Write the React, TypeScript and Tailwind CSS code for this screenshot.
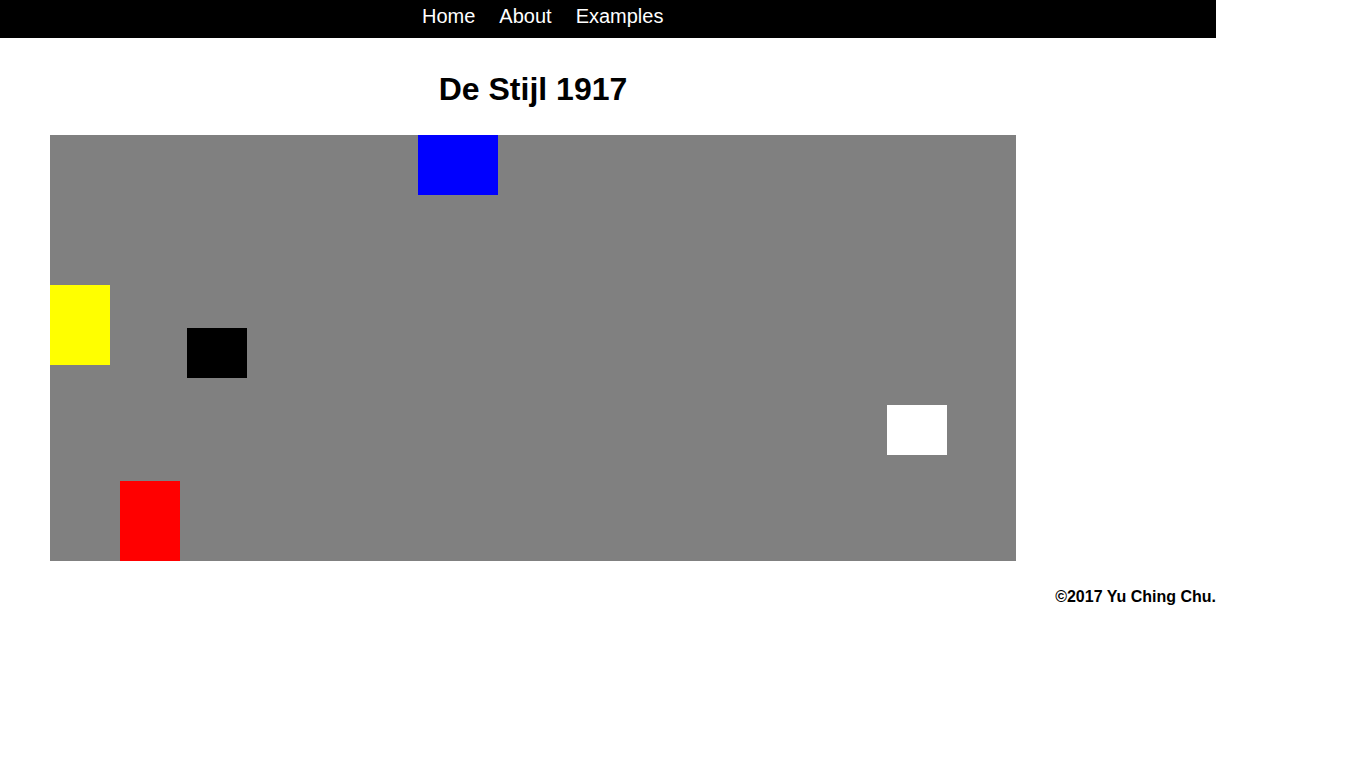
import React from 'react';

type Block = { color: string; left: number; top: number; w: number; h: number };

const blocks: Block[] = [
  { color: 'bg-[#0000ff]', left: 368, top: 0, w: 80, h: 60 },
  { color: 'bg-[#ffff00]', left: 0, top: 150, w: 60, h: 80 },
  { color: 'bg-[#000000]', left: 137, top: 193, w: 60, h: 50 },
  { color: 'bg-[#ffffff]', left: 837, top: 270, w: 60, h: 50 },
  { color: 'bg-[#ff0000]', left: 70, top: 346, w: 60, h: 80 },
];

const links = ['Home', 'About', 'Examples'];

export default function App() {
  return (
    <div className="w-[1216px] bg-white text-black font-['Liberation_Sans',Arial,sans-serif]">
      <nav className="h-[38px] bg-black pt-[5px]">
        <ul className="flex ml-[410px]">
          {links.map((link) => (
            <li key={link}>
              <a href="#" className="block px-3 text-[20px] leading-[23px] text-white">
                {link}
              </a>
            </li>
          ))}
        </ul>
      </nav>

      <main className="pl-[50px]">
        <h1 className="w-[966px] mt-[33px] text-center text-[32px] leading-[37px] font-bold">
          De Stijl 1917
        </h1>

        <div className="relative mt-[27px] w-[966px] h-[426px] bg-[#808080] overflow-hidden">
          {blocks.map((b, i) => (
            <div
              key={i}
              className={`absolute ${b.color}`}
              style={{ left: b.left, top: b.top, width: b.w, height: b.h }}
            />
          ))}
        </div>
      </main>

      <footer className="mt-[27px] text-right text-[16px] leading-[18px] font-bold">
        ©2017 Yu Ching Chu.
      </footer>
    </div>
  );
}
